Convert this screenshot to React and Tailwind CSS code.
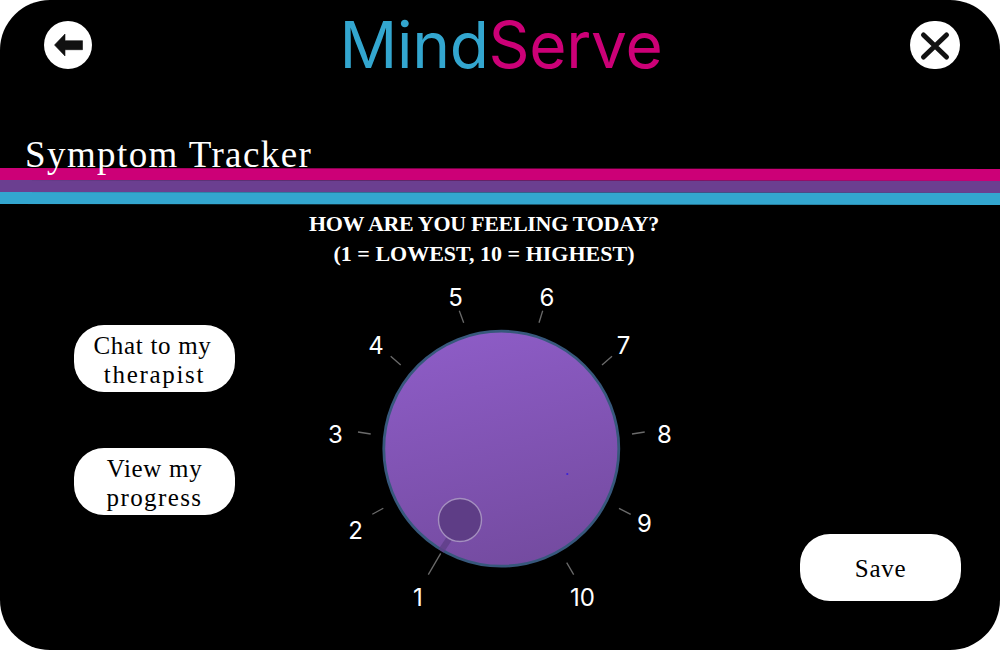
import React from "react";

const ticks = [
  [108.3, 294.7, 120.7, 273.3],
  [52.3, 234.3, 63.3, 228.3],
  [38, 152, 50.7, 154],
  [70.7, 76.3, 80.7, 85],
  [139.3, 30.7, 143.7, 42.7],
  [222.7, 30.7, 219, 42.7],
  [292, 76.3, 282, 85],
  [324.7, 152, 312, 154],
  [310.7, 234.3, 299, 228.3],
  [253.7, 294.7, 246.7, 282.7],
];

const labels = [
  { n: 1, x: 98, y: 318 },
  { n: 2, x: 35.5, y: 251 },
  { n: 3, x: 15.5, y: 155 },
  { n: 4, x: 56, y: 66 },
  { n: 5, x: 135.5, y: 18 },
  { n: 6, x: 227, y: 18 },
  { n: 7, x: 303.5, y: 66 },
  { n: 8, x: 344.5, y: 155 },
  { n: 9, x: 324.5, y: 244 },
  { n: 10, x: 262.5, y: 318 },
];

function Dial() {
  return (
    <div className="relative w-[360px] h-[330px] font-['Inter',sans-serif] text-white text-[24px] leading-none">
      <svg width="360" height="330" viewBox="0 0 360 330" className="block">
        <defs>
          <linearGradient id="dialFill" x1="0.35" y1="0" x2="0.6" y2="1">
            <stop offset="0" stopColor="#8d5cc6" />
            <stop offset="1" stopColor="#744ba0" />
          </linearGradient>
        </defs>
        {ticks.map((t, i) => (
          <line key={i} x1={t[0]} y1={t[1]} x2={t[2]} y2={t[3]} stroke="#6b6b6b" strokeWidth="1.3" />
        ))}
        <circle cx="181.3" cy="168.7" r="117.5" fill="url(#dialFill)" stroke="#37587c" strokeWidth="2.8" />
        <line x1="121" y1="271" x2="131" y2="256" stroke="#5f3f88" strokeWidth="6" opacity="0.8" />
        <circle cx="140" cy="240" r="21.5" fill="#5e3d86" stroke="#a48fbf" strokeWidth="1.4" />
        <circle cx="247.3" cy="194" r="1.1" fill="#3a22d8" />
      </svg>
      {labels.map(l => (
        <span
          key={l.n}
          className="absolute -translate-x-1/2 -translate-y-1/2"
          style={{ left: l.x, top: l.y }}
        >
          {l.n}
        </span>
      ))}
    </div>
  );
}

function PillButton({ children }) {
  return (
    <button className="w-[161px] h-[67px] pt-[2px] rounded-[30px] bg-white text-black text-[25px] leading-[29px] text-center font-['Liberation_Serif',serif] tracking-[0.7px]">
      {children}
    </button>
  );
}

export default function App() {
  return (
    <div className="w-[1000px] h-[650px] bg-white overflow-hidden">
      <div className="w-full h-full bg-black rounded-[50px] flex flex-col">
        {/* Header */}
        <div className="flex items-center justify-between pl-[44px] pr-[40px] pt-[21px]">
          <button className="w-[48px] h-[48px] rounded-full bg-white flex items-center justify-center">
            <svg width="48" height="48" viewBox="0 0 48 48">
              <path d="M10.5 24 L21 13 V19.7 H38.5 V28.7 H21 V35 Z" fill="#111" stroke="#111" strokeWidth="0.6" strokeLinejoin="round" />
            </svg>
          </button>
          <div className="text-[64px] leading-[48px] font-['Inter',sans-serif] font-normal tracking-[-0.3px]">
            <span className="text-[#33a6cf]">Mind</span>
            <span className="text-[#cc0077]">Serve</span>
          </div>
          <button className="w-[50px] h-[48px] rounded-full bg-white flex items-center justify-center">
            <svg width="50" height="48" viewBox="0 0 50 48">
              <path d="M13.5 14 L36.5 36 M36.5 14 L13.5 36" stroke="#111" strokeWidth="5" strokeLinecap="round" />
            </svg>
          </button>
        </div>

        {/* Title sits on top of the bands */}
        <h1 className="relative z-10 mt-[64px] -mb-[9px] pl-[25px] text-white text-[37px] leading-[44px] font-normal font-['Liberation_Serif',serif] tracking-[1.4px]">
          Symptom Tracker
        </h1>
        {/* bands drop about 1px across the width */}
        <div className="flex flex-col translate-y-[0.5px] rotate-[0.057deg]">
          <div className="h-[12px] bg-[#cc0077]" />
          <div className="h-[12px] bg-[#6b3f90]" />
          <div className="h-[12px] bg-[#33a6cf]" />
        </div>

        <div className="pt-[5px] pr-[32px] text-center text-white text-[22px] leading-[29.5px] font-semibold font-['Liberation_Serif',serif]">
          <div className="tracking-[-0.3px]">HOW ARE YOU FEELING TODAY?</div>
          <div>(1 = LOWEST, 10 = HIGHEST)</div>
        </div>

        {/* Body */}
        <div className="flex items-start pl-[74px] mt-[12px]">
          <div className="flex flex-col gap-[56px] pt-[45px] mr-[85px]">
            <PillButton>
              <span className="mr-[4px]">Chat to my</span>
              <br />
              <span className="tracking-[1.7px]">therapist</span>
            </PillButton>
            <PillButton>
              View my
              <br />
              <span className="tracking-[1.4px]">progress</span>
            </PillButton>
          </div>
          <Dial />
          <div className="ml-[120px] pt-[254px]">
            <PillButton>Save</PillButton>
          </div>
        </div>
      </div>
    </div>
  );
}
